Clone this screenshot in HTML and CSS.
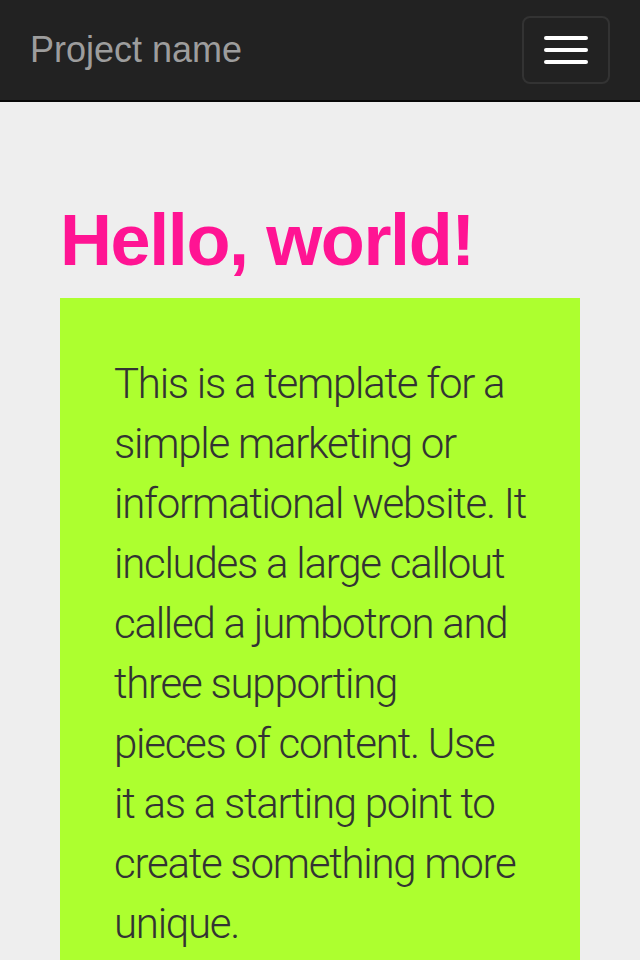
FILE: index.html
```html
<!DOCTYPE html>
<html lang="en">
<head>
<meta charset="utf-8">
<title>Jumbotron</title>
<link rel="stylesheet" href="styles.css">
</head>
<body>
<nav class="navbar">
  <a class="brand" href="#">Project name</a>
  <button class="toggle" type="button" aria-label="Toggle navigation">
    <span class="bar"></span>
    <span class="bar"></span>
    <span class="bar"></span>
  </button>
</nav>
<main class="jumbotron">
  <h1 class="title">Hello, world!</h1>
  <div class="callout">
    <p class="lead">This is a template for a<br>simple marketing or<br>informational website. It<br>includes a large callout<br>called a jumbotron and<br>three supporting<br>pieces of content. Use<br>it as a starting point to<br>create something more<br>unique.</p>
  </div>
</main>
</body>
</html>
```
FILE: styles.css
```css
* { box-sizing: border-box; }
html, body { margin: 0; padding: 0; }
body {
  background: #eeeeee;
  color: #333333;
  font-family: "Liberation Sans", Arial, sans-serif;
}
.navbar {
  height: 102px;
  background: #222222;
  border-bottom: 2px solid #080808;
  display: flex;
  align-items: flex-start;
  justify-content: space-between;
}
.brand {
  display: block;
  padding: 30px 30px;
  font-size: 36px;
  line-height: 40px;
  color: #9d9d9d;
  text-decoration: none;
}
.toggle {
  margin: 16px 30px 0 0;
  width: 88px;
  height: 68px;
  background: transparent;
  border: 2px solid #333333;
  border-radius: 8px;
  padding: 0 20px;
  display: flex;
  flex-direction: column;
  justify-content: center;
  gap: 8px;
}
.bar {
  display: block;
  width: 44px;
  height: 4px;
  background: #ffffff;
  border-radius: 2px;
}
.jumbotron {
  padding: 99px 60px 0 60px;
}
.title {
  margin: 0 0 18px 0;
  font-size: 72px;
  line-height: 79px;
  font-weight: bold;
  letter-spacing: -1.4px;
  color: #ff1493;
}
.callout {
  background: #adff2f;
  width: 520px;
  padding: 56px 30px 40px 54px;
}
.lead {
  margin: 0;
  font-family: Roboto, "Liberation Sans", sans-serif;
  font-weight: 300;
  font-size: 42px;
  line-height: 60px;
  letter-spacing: -1.25px;
  white-space: nowrap;
  color: #333333;
}
```
